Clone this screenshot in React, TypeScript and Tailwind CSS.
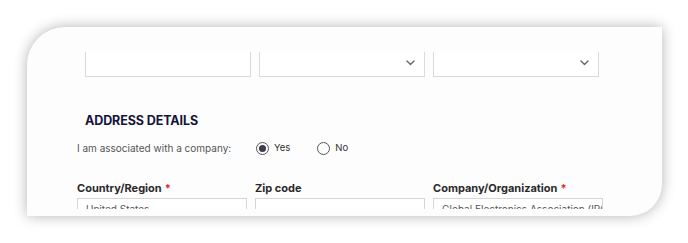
const topFields = [{ chevron: false }, { chevron: true }, { chevron: true }];

const bottomFields = [
  { label: "Country/Region", required: true, value: "United States" },
  { label: "Zip code", required: false, value: "" },
  { label: "Company/Organization", required: true, value: "Global Electronics Association (IPC)" },
];

const Chevron = () => (
  <svg width="9" height="6" viewBox="0 0 9 6" fill="none" className="text-[#666]">
    <path d="M1 1l3.5 3.5L8 1" stroke="currentColor" strokeWidth="1.4" strokeLinecap="round" strokeLinejoin="round" />
  </svg>
);

const Radio = ({ checked, label }: { checked: boolean; label: string }) => (
  <div className="flex items-center gap-[5px]">
    <span className="flex h-[13px] w-[13px] items-center justify-center rounded-full border border-[#555]">
      {checked && <span className="h-[7px] w-[7px] rounded-full bg-[#3d3d4f]" />}
    </span>
    <span className="text-[9.5px] text-[#333]">{label}</span>
  </div>
);

export default function App() {
  return (
    <div
      className="h-[243px] w-[688px] bg-white pl-[27px] pt-[27px]"
      style={{ fontFamily: "Inter, 'Liberation Sans', sans-serif" }}
    >
      <div className="h-[189px] w-[635px] overflow-hidden rounded-tl-[38px] rounded-br-[32px] bg-[#fdfdfd] pt-[25px] shadow-[0_0_14px_rgba(0,0,0,0.3)]">
        <div className="h-[157px] overflow-hidden">
          {/* top row, scrolled partly out of view */}
          <div className="-mt-[11px] flex gap-[8px] pl-[58px]">
            {topFields.map((f, i) => (
              <div
                key={i}
                className="flex h-[36px] w-[166px] items-end justify-end border border-[#dadada] bg-white pb-[10px] pr-[9px]"
              >
                {f.chevron && <Chevron />}
              </div>
            ))}
          </div>

          <h2 className="mt-[36px] pl-[58px] text-[12.5px] font-bold leading-[16px] tracking-[-0.1px] text-[#14143a]">
            ADDRESS DETAILS
          </h2>

          <div className="mt-[12px] flex items-center pl-[50px]">
            <span className="w-[179px] text-[10px] text-[#555]">I am associated with a company:</span>
            <Radio checked label="Yes" />
            <div className="ml-[27px]">
              <Radio checked={false} label="No" />
            </div>
          </div>

          <div className="mt-[25px] flex gap-[8px] pl-[50px]">
            {bottomFields.map((f) => (
              <div key={f.label} className="w-[170px]">
                <div className="text-[11px] font-bold leading-[14px] text-[#2a2a2a]">
                  {f.label}
                  {f.required && <span className="ml-[3px] text-[#e0262b]">*</span>}
                </div>
                <div className="mt-[3px] h-[34px] overflow-hidden whitespace-nowrap border border-[#d6d6d6] bg-white px-[8px] pt-[3px] text-[10px] leading-[14px] text-[#555]">
                  {f.value}
                </div>
              </div>
            ))}
          </div>
        </div>
      </div>
    </div>
  );
}
